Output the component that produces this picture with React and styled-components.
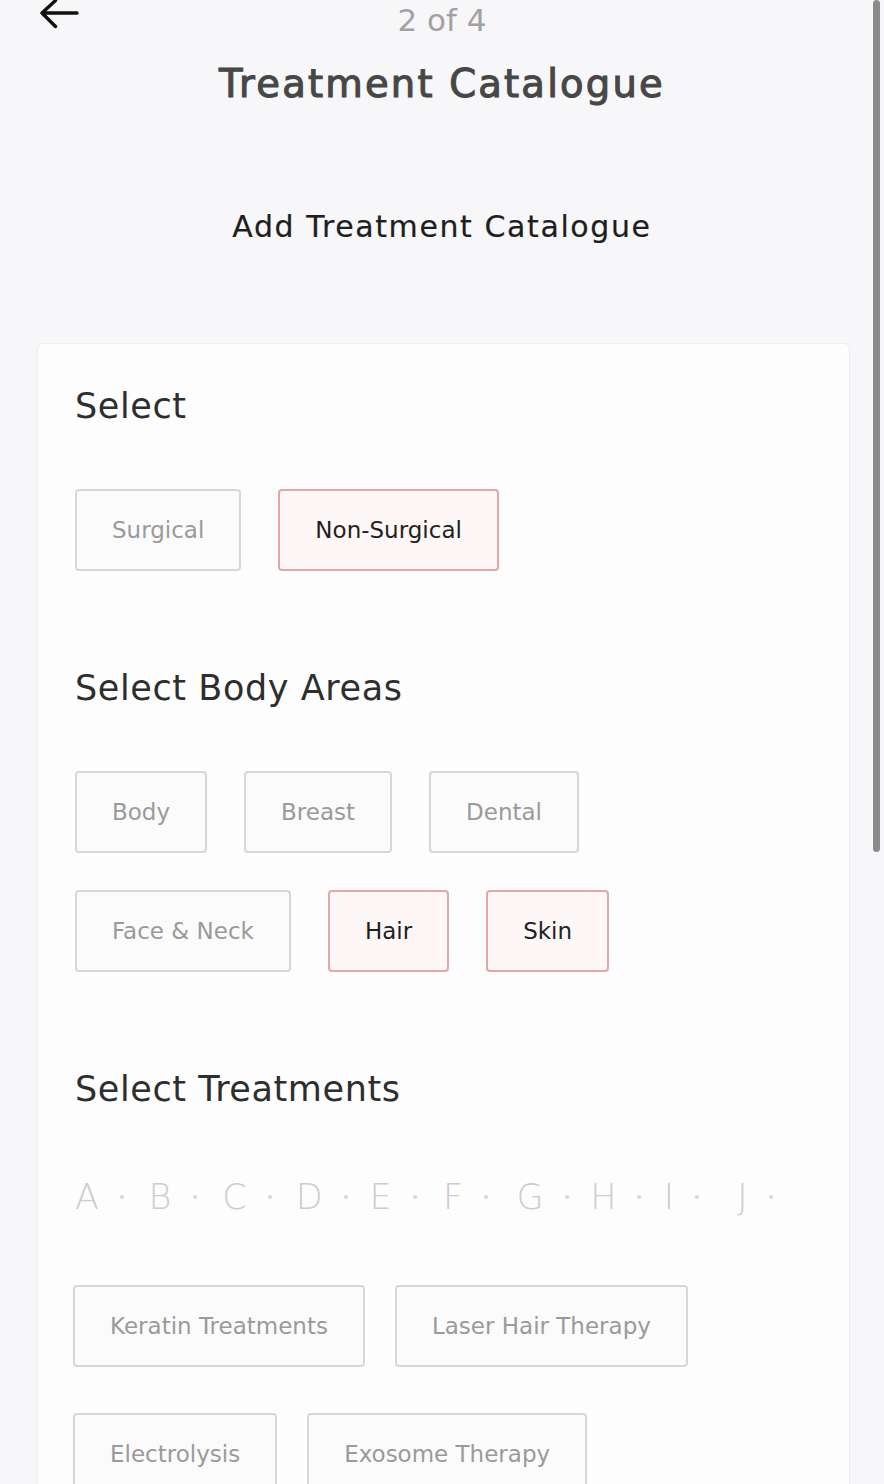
import React from "react";
import styled, { createGlobalStyle } from "styled-components";

const GlobalStyle = createGlobalStyle`
  html, body {
    margin: 0;
    padding: 0;
    background: #f7f6f9;
  }
  body {
    font-family: "DejaVu Sans", "Noto Sans", sans-serif;
    overflow: hidden;
  }
`;

const bodyAreas = [
  { label: "Body" },
  { label: "Breast" },
  { label: "Dental" },
  { label: "Face & Neck" },
  { label: "Hair", active: true },
  { label: "Skin", active: true },
];

const letters = ["A", "B", "C", "D", "E", "F", "G", "H", "I", "J"];

const treatments = [
  "Keratin Treatments",
  "Laser Hair Therapy",
  "Electrolysis",
  "Exosome Therapy",
];

function BackArrow() {
  return (
    <svg width="40" height="30" viewBox="0 0 40 30" fill="none">
      <path
        d="M38 13H3M16.5 0.5L3 13L16.5 26.5"
        stroke="#111"
        strokeWidth="3.4"
        strokeLinecap="round"
        strokeLinejoin="round"
      />
    </svg>
  );
}

export default function App() {
  return (
    <Page>
      <GlobalStyle />
      <Header>
        <BackButton>
          <BackArrow />
        </BackButton>
        <Step>2 of 4</Step>
        <span />
      </Header>
      <Title>Treatment Catalogue</Title>
      <Subtitle>Add Treatment Catalogue</Subtitle>

      <Card>
        <SectionTitle>Select</SectionTitle>
        <ChipRow>
          <Chip>Surgical</Chip>
          <Chip $active>Non-Surgical</Chip>
        </ChipRow>

        <SectionTitle $spaced>Select Body Areas</SectionTitle>
        <ChipRow>
          {bodyAreas.map((area) => (
            <Chip key={area.label} $active={area.active}>
              {area.label}
            </Chip>
          ))}
        </ChipRow>

        <SectionTitle $spaced>Select Treatments</SectionTitle>
        <AlphaBar>
          {letters.map((l) => (
            <AlphaCell key={l}>
              <Letter>{l}</Letter>
              <Dot />
            </AlphaCell>
          ))}
        </AlphaBar>
        <TreatmentRow>
          {treatments.map((t) => (
            <Chip key={t}>{t}</Chip>
          ))}
        </TreatmentRow>
      </Card>
      <ScrollThumb />
    </Page>
  );
}

const Page = styled.div`
  width: 884px;
  height: 1484px;
  overflow: hidden;
  background: #f7f6f9;
  position: relative;
`;

const Header = styled.div`
  display: grid;
  grid-template-columns: 1fr auto 1fr;
  align-items: start;
  padding-top: 2px;
`;

const BackButton = styled.button`
  display: flex;
  align-items: flex-start;
  background: none;
  border: none;
  padding: 0 0 0 39px;
  margin-top: -2px;
  cursor: pointer;
`;

const Step = styled.div`
  font-size: 31px;
  line-height: 36px;
  color: #a2a2a2;
  text-align: center;
`;

const Title = styled.h1`
  margin: 24px 0 0;
  font-size: 38.5px;
  line-height: 44px;
  font-weight: 400;
  letter-spacing: 2.2px;
  color: #474747;
  -webkit-text-stroke: 1.1px #474747;
  text-align: center;
`;

const Subtitle = styled.h2`
  margin: 103px 0 0;
  font-size: 30px;
  line-height: 36px;
  font-weight: 400;
  letter-spacing: 1.6px;
  color: #1e1e1e;
  -webkit-text-stroke: 0.2px #1e1e1e;
  text-align: center;
`;

const Card = styled.section`
  margin: 98px 34px 0 37px;
  padding: 41px 37px 80px;
  background: #fdfdfe;
  border: 1px solid #eeedf1;
  border-radius: 6px;
  min-height: 1200px;
`;

const SectionTitle = styled.h3`
  margin: ${(p) => (p.$spaced ? "96px" : "0")} 0 0;
  font-size: 35px;
  line-height: 42px;
  font-weight: 400;
  letter-spacing: 0.6px;
  color: #2e2e2e;
`;

const ChipRow = styled.div`
  display: flex;
  flex-wrap: wrap;
  gap: 37px;
  margin-top: 62px;
`;

const Chip = styled.button`
  box-sizing: border-box;
  height: 82px;
  padding: 0 35px;
  border: 2px solid ${(p) => (p.$active ? "#e4a6a6" : "#d7d7d9")};
  border-radius: 4px;
  background: ${(p) => (p.$active ? "#fdf7f7" : "#fbfbfc")};
  color: ${(p) => (p.$active ? "#1f1f1f" : "#9a9a9a")};
  font-family: "DejaVu Sans", "Noto Sans", sans-serif;
  font-size: 23px;
  cursor: pointer;
`;

const AlphaBar = styled.div`
  display: flex;
  margin-top: 67px;
`;

const AlphaCell = styled.div`
  display: flex;
  align-items: center;
  gap: 21px;
  width: 73.6px;
  flex-shrink: 0;
`;

const Letter = styled.span`
  font-size: 35px;
  line-height: 40px;
  font-weight: 200;
  color: #cdcdcf;
`;

const Dot = styled.span`
  width: 4px;
  height: 4px;
  border-radius: 50%;
  background: #d9d9db;
  flex-shrink: 0;
`;

const TreatmentRow = styled.div`
  display: flex;
  flex-wrap: wrap;
  gap: 46px 30px;
  margin: 68px 0 0 -2px;
  width: 640px;
`;

const ScrollThumb = styled.div`
  position: fixed;
  top: 0;
  right: 4px;
  width: 7px;
  height: 852px;
  border-radius: 4px;
  background: #8b8b8b;
`;
